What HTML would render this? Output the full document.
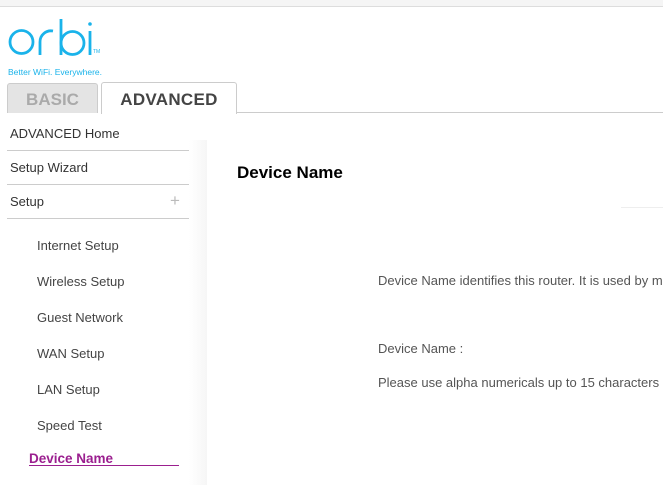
<!DOCTYPE html>
<html><head><style>
body{margin:0;width:663px;height:485px;overflow:hidden;background:#fff;font-family:"Liberation Sans",Arial,sans-serif;position:relative}
.a{position:absolute;white-space:nowrap}
.nav{font-size:13px;color:#333}
.sub{font-size:13px;color:#444}
.t{font-size:13px;color:#555}
.hl{position:absolute;left:7px;width:182px;height:1px;background:#ccc}
</style></head><body>
<div class="a" style="left:0;top:0;width:663px;height:6px;background:#f5f5f5;border-bottom:1px solid #ddd"></div>
<svg class="a" style="left:0;top:0" width="110" height="65" viewBox="0 0 110 65">
<g fill="none" stroke="#1ab3ea" stroke-width="2.8">
<circle cx="21.5" cy="42" r="11.5"/>
<path d="M40 55V42a11 11 0 0 1 13-11"/>
<path d="M61 19V55"/>
<circle cx="72.5" cy="43" r="11.5"/>
<path d="M90 31V55"/>
</g>
<circle cx="90" cy="24" r="1.8" fill="#1ab3ea"/>
</svg>
<div class="a" style="left:93px;top:49px;font-size:5px;color:#1ab3ea">TM</div>
<div class="a" style="left:8px;top:67px;font-size:8.5px;color:#1ab3ea">Better WiFi. Everywhere.</div>
<div class="a" style="left:7px;top:83px;width:89px;height:29px;background:#e4e4e4;border:1px solid #ccc;border-bottom:none;border-radius:3px 3px 0 0;font-size:17px;font-weight:bold;color:#aaa;text-align:center;line-height:32px">BASIC</div>
<div class="a" style="left:101px;top:82px;width:134px;height:31px;background:#fff;border:1px solid #ccc;border-bottom:none;border-radius:3px 3px 0 0;font-size:17px;font-weight:bold;color:#444;text-align:center;line-height:34px;letter-spacing:0.3px">ADVANCED</div>
<div class="a" style="left:236px;top:112px;width:427px;height:1px;background:#ccc"></div>
<div class="a" style="left:189px;top:140px;width:18px;height:345px;background:linear-gradient(to right,#fff,#f6f6f6)"></div>
<div class="a nav" style="left:10px;top:126px">ADVANCED Home</div>
<div class="hl" style="top:150px"></div>
<div class="a nav" style="left:10px;top:160px">Setup Wizard</div>
<div class="hl" style="top:184px"></div>
<div class="a nav" style="left:10px;top:194px">Setup</div>
<div class="a" style="left:170px;top:191px;font-size:17px;color:#bbb;font-weight:200">+</div>
<div class="hl" style="top:218px"></div>
<div class="a sub" style="left:37px;top:238px">Internet Setup</div>
<div class="a sub" style="left:37px;top:274px">Wireless Setup</div>
<div class="a sub" style="left:37px;top:310px">Guest Network</div>
<div class="a sub" style="left:37px;top:346px">WAN Setup</div>
<div class="a sub" style="left:37px;top:382px">LAN Setup</div>
<div class="a sub" style="left:37px;top:418px">Speed Test</div>
<div class="a" style="left:29px;top:451px;font-size:13.5px;font-weight:bold;color:#9b1f8f">Device Name</div>
<div class="a" style="left:29px;top:465px;width:150px;height:1px;background:#9b1f8f"></div>
<div class="a" style="left:237px;top:163px;font-size:17px;font-weight:bold;color:#000">Device Name</div>
<div class="a" style="left:621px;top:207px;width:42px;height:1px;background:#eee"></div>
<div class="a t" style="left:378px;top:273px">Device Name identifies this router. It is used by m</div>
<div class="a t" style="left:378px;top:341px">Device Name :</div>
<div class="a t" style="left:378px;top:375px">Please use alpha numericals up to 15 characters</div>
</body></html>
